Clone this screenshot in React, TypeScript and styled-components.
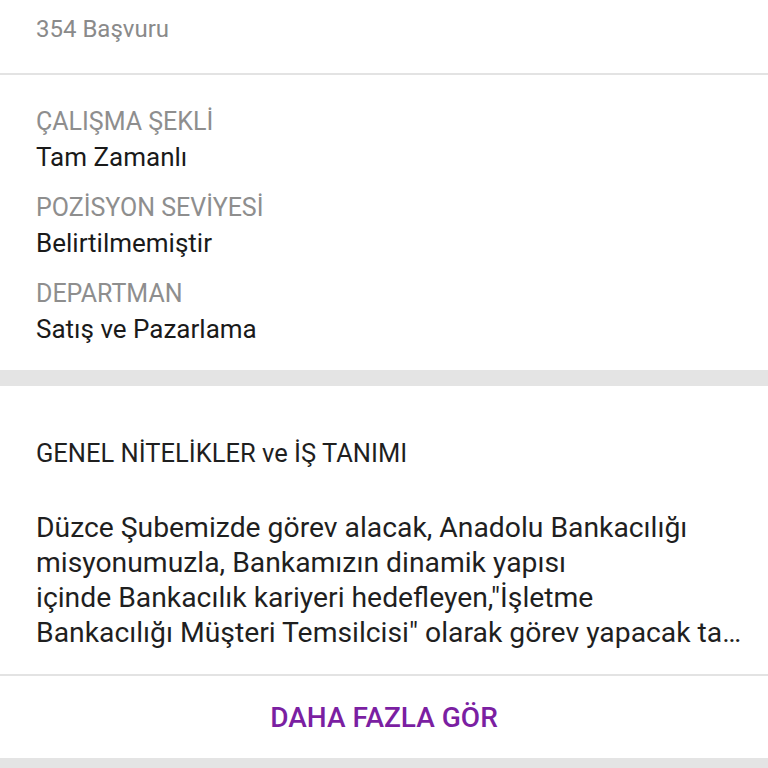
import React from 'react';
import styled, { createGlobalStyle } from 'styled-components';

const GlobalStyle = createGlobalStyle`
  html, body {
    margin: 0;
    padding: 0;
    background: #ffffff;
  }
  body {
    font-family: Roboto, "Noto Sans", "Liberation Sans", sans-serif;
    -webkit-font-smoothing: antialiased;
  }
`;

const details = [
  { label: 'ÇALIŞMA ŞEKLİ', value: 'Tam Zamanlı' },
  { label: 'POZİSYON SEVİYESİ', value: 'Belirtilmemiştir' },
  { label: 'DEPARTMAN', value: 'Satış ve Pazarlama' },
];

const descLines = [
  'Düzce Şubemizde görev alacak, Anadolu Bankacılığı',
  'misyonumuzla, Bankamızın dinamik yapısı',
  'içinde Bankacılık kariyeri hedefleyen,"İşletme',
  'Bankacılığı Müşteri Temsilcisi" olarak görev yapacak takım arkadaşları arıyoruz.',
];

const App: React.FC = () => {
  return (
    <Page>
      <GlobalStyle />
      <ApplyCount>354 Başvuru</ApplyCount>

      <DetailList>
        {details.map((d) => (
          <DetailItem key={d.label}>
            <DetailLabel>{d.label}</DetailLabel>
            <DetailValue>{d.value}</DetailValue>
          </DetailItem>
        ))}
      </DetailList>

      <Band />

      <Description>
        <DescTitle>GENEL NİTELİKLER ve İŞ TANIMI</DescTitle>
        <DescText>
          {descLines.map((line, i) => (
            <DescLine key={i}>{line}</DescLine>
          ))}
        </DescText>
      </Description>

      <MoreButton type="button">DAHA FAZLA GÖR</MoreButton>

      <Band $small />
    </Page>
  );
};

export default App;

const Page = styled.div`
  width: 768px;
  height: 768px;
  overflow: hidden;
  display: flex;
  flex-direction: column;
  background: #fff;
`;

const ApplyCount = styled.div`
  padding: 14px 36px 29px;
  font-size: 24px;
  line-height: 30px;
  color: #8a8a8a;
  border-bottom: 2px solid #e3e3e3;
`;

const DetailList = styled.div`
  display: flex;
  flex-direction: column;
  gap: 16px;
  padding: 30px 36px 23px;
`;

const DetailItem = styled.div`
  display: flex;
  flex-direction: column;
`;

const DetailLabel = styled.div`
  font-size: 25px;
  line-height: 34px;
  color: #8e8e8e;
`;

const DetailValue = styled.div`
  font-size: 26px;
  line-height: 36px;
  color: #1a1a1a;
`;

const Band = styled.div<{ $small?: boolean }>`
  flex: none;
  height: ${(p) => (p.$small ? '10px' : '16px')};
  background: #e4e4e4;
`;

const Description = styled.div`
  padding: 52px 24px 24px 36px;
  border-bottom: 2px solid #e3e3e3;
`;

const DescTitle = styled.div`
  font-size: 25.5px;
  line-height: 30px;
  color: #1f1f1f;
  margin-bottom: 42px;
`;

const DescText = styled.div`
  font-size: 28.3px;
  line-height: 35px;
  color: #1f1f1f;
`;

const DescLine = styled.div`
  white-space: nowrap;
  overflow: hidden;
  text-overflow: ellipsis;
`;

const MoreButton = styled.button`
  flex: none;
  height: 82px;
  border: none;
  background: #fff;
  font-family: Roboto, "Noto Sans", sans-serif;
  font-weight: 500;
  font-size: 28px;
  color: #7b1fa2;
  cursor: pointer;
  padding: 0;
`;
